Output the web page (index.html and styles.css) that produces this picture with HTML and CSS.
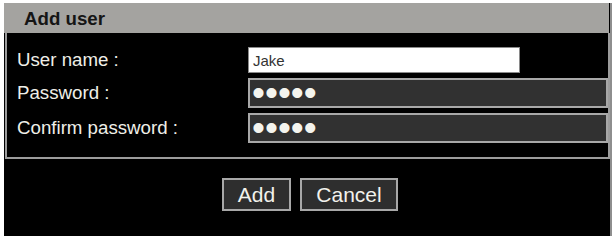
FILE: index.html
```html
<!DOCTYPE html>
<html lang="en">
<head>
    <meta charset="UTF-8">
    <title>Add user</title>
    <link rel="stylesheet" href="styles.css">
</head>
<body>
    <div class="panel">
        <div class="title">Add user</div>

        <div class="box">
            <section class="row">
                <label for="userName" class="m-name">User name :</label>
                <input type="text" id="userName" class="in-text" value="Jake">
            </section>

            <section class="row">
                <label for="userPw" class="m-name">Password :</label>
                <input type="password" id="userPw" class="in-pw" value="12345">
            </section>

            <section class="row">
                <label for="userPwCk" class="m-name">Confirm password :</label>
                <input type="password" id="userPwCk" class="in-pw" value="12345">
            </section>
        </div>

        <div id="btn">
            <button class="add">Add</button>
            <button class="cancel">Cancel</button>
        </div>
    </div>
</body>
</html>
```

FILE: styles.css
```css
body {
    margin: 0;
    padding: 3px 0 0 4px;
    background: #fff;
    font-family: "Liberation Sans", Arial, sans-serif;
}

.panel {
    width: 606px;
    height: 233px;
    background: #000;
    border-right: 2px solid #8e8e8e;
}

.title {
    height: 30px;
    line-height: 31px;
    margin-right: 1px;
    padding-left: 20px;
    background: #a4a3a0;
    color: #151515;
    font-size: 18.7px;
    font-weight: bold;
}

.box {
    margin-left: 1px;
    padding: 14px 0 14px 10px;
    border: 2px solid #9c9c9c;
    border-top: none;
    display: flex;
    flex-direction: column;
    gap: 5px;
}

.row {
    display: flex;
    align-items: center;
}

.m-name {
    width: 231px;
    color: #efefe8;
    font-size: 18.7px;
}

.in-text {
    box-sizing: border-box;
    width: 272px;
    height: 26px;
    margin: 0;
    padding: 0 4px;
    border: 1px solid #8a8a8a;
    background: #fff;
    color: #333;
    font-family: inherit;
    font-size: 15px;
}

.in-pw {
    box-sizing: border-box;
    width: 360px;
    height: 30px;
    margin: 0;
    padding: 0 2px;
    border: 2px solid #a8a8a8;
    background: #313131;
    color: #f4f4ee;
    font-family: inherit;
    font-size: 37px;
    letter-spacing: 0;
}

#btn {
    display: flex;
    justify-content: center;
    gap: 9px;
    margin-top: 19px;
    padding-left: 6px;
}

button {
    height: 33px;
    border: 2px solid #a8a8a8;
    background: #2e2e2e;
    color: #f2f2ec;
    font-family: inherit;
    font-size: 21px;
    padding: 0;
}

.add {width: 69px;}

.cancel {width: 98px;}
```
